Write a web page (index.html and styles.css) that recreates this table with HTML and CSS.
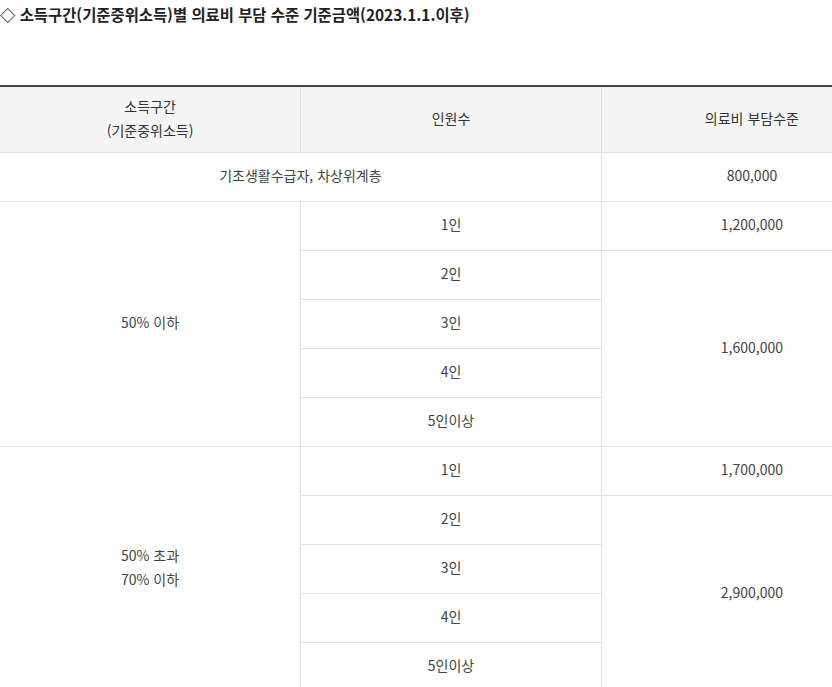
FILE: index.html
```html
<!DOCTYPE html>
<html lang="ko">
<head>
<meta charset="utf-8">
<title>의료비 부담 수준 기준금액</title>
<link rel="stylesheet" href="styles.css">
</head>
<body>
<h3 class="title">◇ 소득구간(기준중위소득)별 의료비 부담 수준 기준금액(2023.1.1.이후)</h3>
<table class="tbl">
  <colgroup><col class="c"><col class="c"><col class="c"></colgroup>
  <thead>
    <tr><th>소득구간<br>(기준중위소득)</th><th>인원수</th><th>의료비 부담수준</th></tr>
  </thead>
  <tbody>
    <tr><td colspan="2">기초생활수급자, 차상위계층</td><td>800,000</td></tr>
    <tr><td rowspan="5">50% 이하</td><td>1인</td><td>1,200,000</td></tr>
    <tr><td>2인</td><td rowspan="4">1,600,000</td></tr>
    <tr><td>3인</td></tr>
    <tr><td>4인</td></tr>
    <tr><td>5인이상</td></tr>
    <tr><td rowspan="5">50% 초과<br>70% 이하</td><td>1인</td><td>1,700,000</td></tr>
    <tr><td>2인</td><td rowspan="4">2,900,000</td></tr>
    <tr><td>3인</td></tr>
    <tr><td>4인</td></tr>
    <tr><td>5인이상</td></tr>
  </tbody>
</table>
</body>
</html>
```
FILE: styles.css
```css
html, body { overflow: hidden; }
body {
  margin: 0;
  font-family: "Noto Sans CJK KR", "Noto Sans", sans-serif;
  color: #333;
  background: #fff;
}
.title {
  margin: 0;
  padding: 2px 0 0 0;
  font-size: 15.4px;
  line-height: 24px;
  font-weight: 700;
  color: #222;
  height: 85px;
  box-sizing: border-box;
}
.tbl {
  width: 902px;
  border-collapse: collapse;
  table-layout: fixed;
  border-top: 2px solid #42424f;
  font-size: 14px;
}
.tbl .c { width: 300px; }
.tbl th, .tbl td {
  text-align: center;
  vertical-align: middle;
  border-bottom: 1px solid #e2e2e6;
  border-left: 1px solid #e2e2e6;
  line-height: 24px;
  padding: 0 0 4px 0;
  color: #444;
}
.tbl th:first-child, .tbl tr > td:first-child[rowspan], .tbl tr > td[colspan] { border-left: 0; }
.tbl th {
  background: #f5f5f5;
  font-weight: 400;
  height: 61px;
  color: #333;
}
.tbl td { height: 44px; }
```
